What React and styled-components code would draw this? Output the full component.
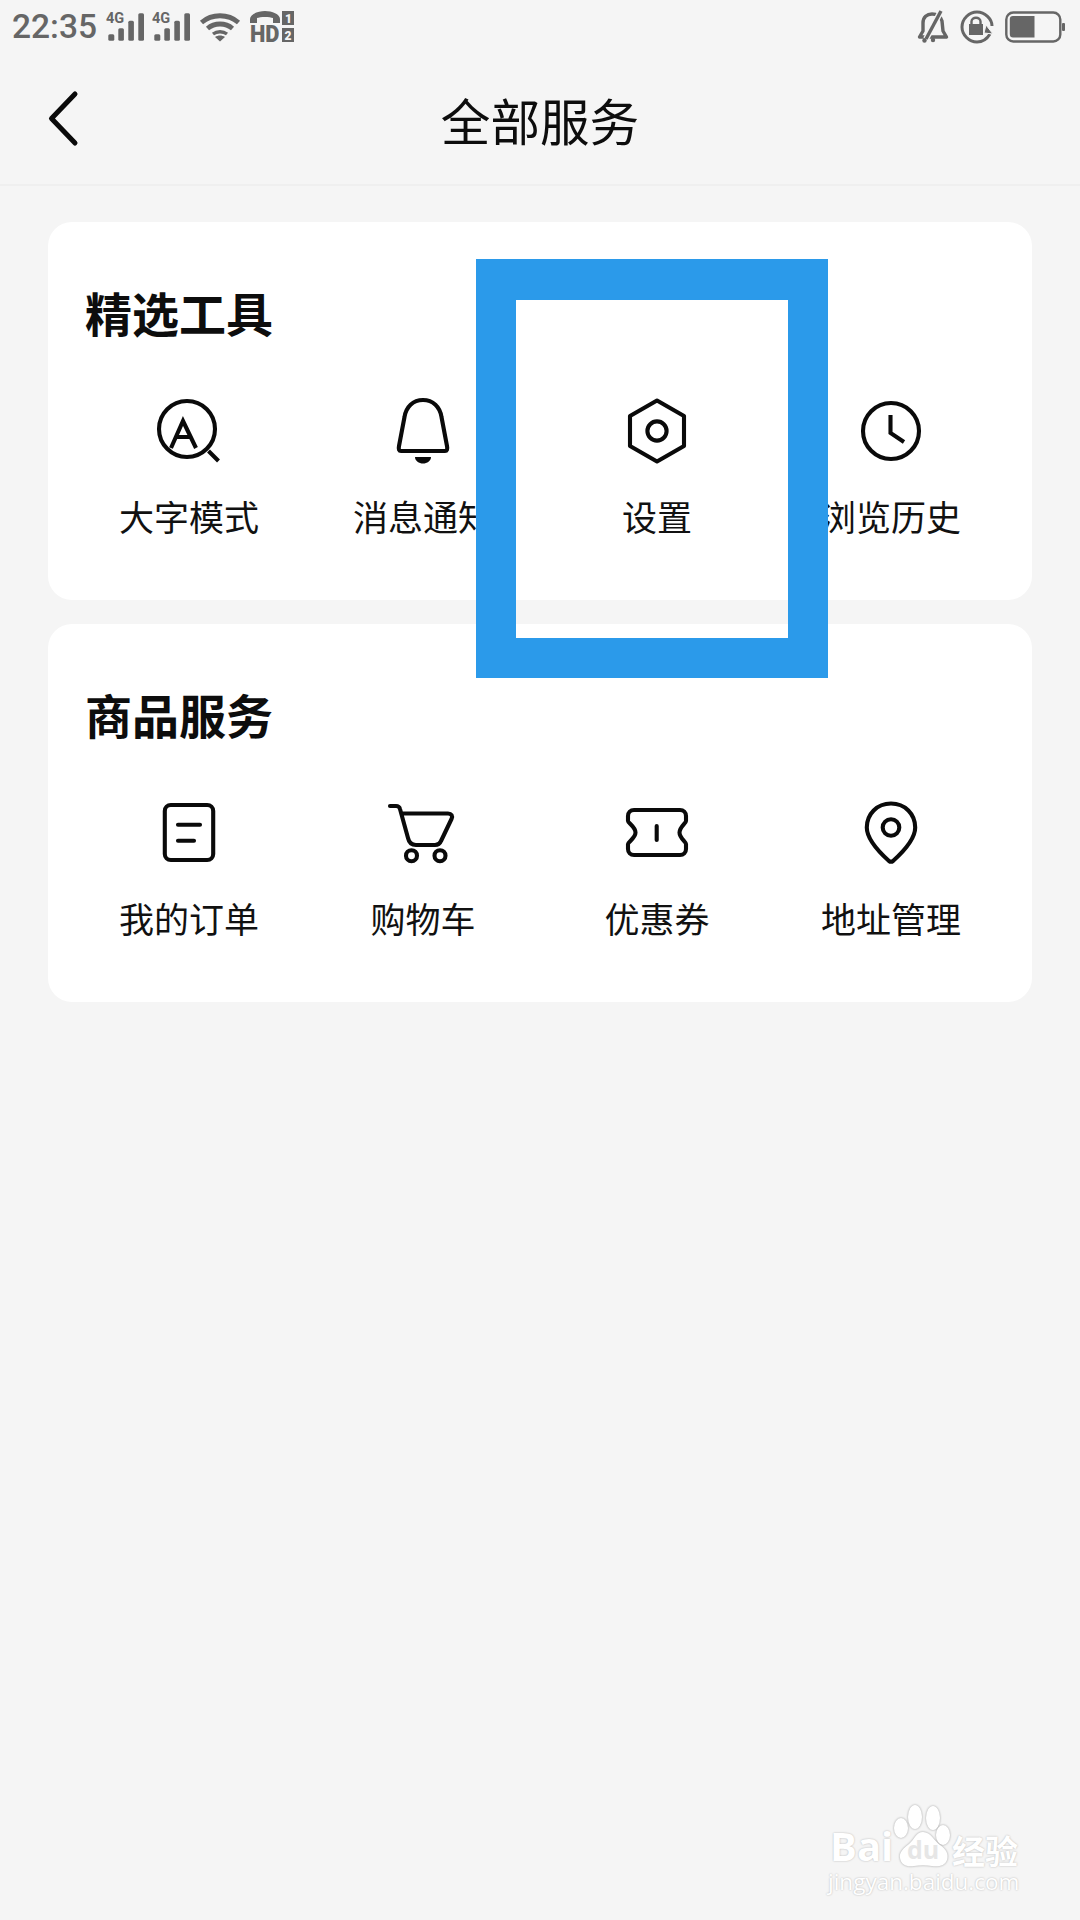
import React from "react";
import styled, { createGlobalStyle } from "styled-components";

const Global = createGlobalStyle`
  html, body { margin: 0; padding: 0; background: #f5f5f5; }
  * { box-sizing: border-box; }
  svg { overflow: visible; }
`;
const CJK = `"Noto Sans CJK SC", "Noto Sans", sans-serif`;

const Page = styled.div`
  position: relative;
  width: 1080px;
  height: 1920px;
  background: #f5f5f5;
  overflow: hidden;
  font-family: ${CJK};
  color: #111;
`;
const Status = styled.div`
  display: flex;
  justify-content: space-between;
  align-items: center;
  height: 54px;
  padding: 0 15px 0 12px;
  color: #666;
`;
const StatusGroup = styled.div`
  display: flex;
  align-items: center;
  gap: ${(p) => p.$gap || 0}px;
`;
const Time = styled.span`
  font: 500 33.5px/54px Roboto, sans-serif;
  color: #666;
  width: 94px;
`;
const WifiSlot = styled.div`
  margin-left: 2px;
`;
const Nav = styled.div`
  display: grid;
  grid-template-columns: 1fr auto 1fr;
  align-items: center;
  height: 132px;
  border-bottom: 2px solid #efefef;
`;
const Back = styled.svg`
  display: block;
  margin-left: 47px;
`;
const Title = styled.h1`
  margin: 0;
  font: 400 49.6px/68px ${CJK};
  color: #0d0d0d;
`;
const Content = styled.div`
  display: flex;
  flex-direction: column;
  gap: 24px;
  padding: 36px 48px 0;
`;
const Card = styled.section`
  background: #fff;
  border-radius: 24px;
  padding: 59px 24px 0;
  height: 378px;
`;
const SectionTitle = styled.h2`
  margin: 0 0 52px 13px;
  font: 700 47px/62px ${CJK};
  color: #0d0d0d;
`;
const Grid = styled.div`
  display: grid;
  grid-template-columns: repeat(4, 1fr);
`;
const Item = styled.div`
  display: flex;
  flex-direction: column;
  align-items: center;
`;
const Icon = styled.svg.attrs({ viewBox: "0 0 72 72", width: 72, height: 72, fill: "none" })`
  display: block;
  stroke: #0a0a0a;
  stroke-width: 4.1;
  stroke-linecap: round;
  stroke-linejoin: round;
`;
const Label = styled.span`
  margin-top: 26px;
  font: 400 35px/46px ${CJK};
  color: #111;
  white-space: nowrap;
`;
const Highlight = styled.div`
  position: absolute;
  left: 476px;
  top: 259px;
  width: 352px;
  height: 419px;
  border: 40px solid #2b9aea;
  border-top-width: 41px;
`;
const Watermark = styled.div`
  position: absolute;
  left: 828px;
  top: 1805px;
  width: 196px;
  color: #fff;
  text-shadow: 0 0 2px rgba(0, 0, 0, 0.28);
`;
const MarkRow = styled.div`
  display: flex;
  align-items: flex-end;
  height: 64px;
`;
const Bai = styled.span`
  flex: none;
  width: 65px;
  padding-left: 2px;
  font: 700 40px/46px "Open Sans", sans-serif;
`;
const PawBox = styled.div`
  position: relative;
  width: 59px;
  height: 64px;
  flex: none;
`;
const Du = styled.span`
  position: absolute;
  left: 14px;
  top: 30px;
  font: 700 25px/28px "Open Sans", sans-serif;
  color: #e6e6e6;
  text-shadow: none;
`;
const Jing = styled.span`
  font: 700 33px/38px ${CJK};
  white-space: nowrap;
`;
const Domain = styled.div`
  font: 400 22.5px/26px "Open Sans", sans-serif;
  white-space: nowrap;
`;

const IconMag = () => (
  <Icon>
    <circle cx="34" cy="34" r="28" />
    <path d="M55.5 56L65.5 66" strokeLinecap="butt" />
    <path d="M18 53L30 26L43 53M23 42H38" strokeLinecap="butt" strokeLinejoin="miter" />
  </Icon>
);
const IconBell = () => (
  <Icon>
    <path d="M36 5C26 5 19 12 17.5 22L12 51Q11 56 14 56H58Q61 56 60 51L54.5 22C53 12 46 5 36 5Z" />
    <path d="M28 62H44C44 66 40 68.5 36 68.5C32 68.5 28 66 28 62Z" fill="#0a0a0a" stroke="none" />
  </Icon>
);
const IconHex = () => (
  <Icon>
    <path d="M36 5.5L63 21V51L36 66.5L9 51V21Z" />
    <circle cx="36" cy="36" r="9.6" />
  </Icon>
);
const IconClock = () => (
  <Icon>
    <circle cx="36" cy="36" r="28" />
    <path d="M35.5 20V38L49 47" strokeLinecap="butt" strokeLinejoin="miter" />
  </Icon>
);
const IconDoc = () => (
  <Icon>
    <rect x="11.8" y="8" width="48.4" height="55" rx="6" />
    <path d="M25 27.7H47M25 43.7H41" />
  </Icon>
);
const IconCart = () => (
  <Icon>
    <path d="M3 9H9C11 9 12.5 10 13 12L21 41C22 45.5 24.5 48 29 48H48C51 48 53 46.5 54 44L64.5 22C66 19 64.5 16.5 61 16.5H15" />
    <circle cx="24.5" cy="58.7" r="5.5" />
    <circle cx="53" cy="58.7" r="5.5" />
  </Icon>
);
const IconTicket = () => (
  <Icon>
    <path d="M13 13H59C62.5 13 65 15.5 65 19V24C65 26 58.5 30 58.5 35.5C58.5 41 65 45 65 47V52C65 55.5 62.5 58 59 58H13C9.5 58 7 55.5 7 52V47C7 45 14.5 41 14.5 35.5C14.5 30 7 26 7 24V19C7 15.5 9.5 13 13 13Z" />
    <path d="M35.7 29V43" />
  </Icon>
);
const IconPin = () => (
  <Icon>
    <path d="M36 6.5C22 6.5 11.8 17 11.8 30.5C11.8 42 24 55 34 64Q36 65.5 38 64C48 55 60.2 42 60.2 30.5C60.2 17 50 6.5 36 6.5Z" />
    <circle cx="36" cy="30.5" r="8.3" />
  </Icon>
);

const Signal = () => (
  <svg width="46" height="32" viewBox="0 0 46 32" fill="#666">
    <text x="0" y="12.3" fontFamily="Roboto, sans-serif" fontWeight="700" fontSize="14.5">4G</text>
    <rect x="2.3" y="23.3" width="6" height="6.4" rx="1.5" />
    <rect x="12.3" y="17.3" width="5.6" height="12.4" rx="1.5" />
    <rect x="22.3" y="9.7" width="5.6" height="20" rx="1.5" />
    <rect x="32.3" y="2.3" width="5.7" height="27.4" rx="1.5" />
  </svg>
);
const Wifi = () => (
  <svg width="40" height="30" viewBox="0 0 40 30" fill="none" stroke="#666" strokeWidth="4.8">
    <path d="M1.5 10.5C12 1.5 28 1.5 38.5 10.5" />
    <path d="M7.5 16.5C14.5 10.5 25.5 10.5 32.5 16.5" />
    <path d="M13 22C17 19 23 19 27 22" strokeWidth="3.4" />
    <path d="M15 25L20 29.5L25 25C22 23 18 23 15 25Z" fill="#666" stroke="none" />
  </svg>
);
const PhoneHd = () => (
  <svg width="44" height="32" viewBox="0 0 44 32" fill="#666">
    <path d="M0 12V8C0 3 8 0 15 0C22 0 30 3 30 8V12H23V7C20 5.5 10 5.5 7 7V12Z" />
    <text x="0" y="30.7" fontFamily="Roboto, sans-serif" fontWeight="900" fontSize="23" textLength="29.5" lengthAdjust="spacingAndGlyphs">HD</text>
    <rect x="32" y="0" width="12" height="14" />
    <rect x="32" y="17" width="12" height="14" />
    <text x="35" y="11.5" fill="#f5f5f5" fontFamily="Roboto, sans-serif" fontWeight="900" fontSize="12">1</text>
    <text x="34.5" y="28.5" fill="#f5f5f5" fontFamily="Roboto, sans-serif" fontWeight="900" fontSize="12">2</text>
  </svg>
);
const BellOff = () => (
  <svg width="32" height="34" viewBox="0 0 32 34" fill="none" stroke="#666" strokeWidth="3.4">
    <path d="M2.5 27L6 21V13C6 7 10 4 15 4C20 4 24 7 25 11L26 21L29.5 27Z" strokeLinejoin="round" />
    <path d="M9 29L24 1" stroke="#f5f5f5" strokeWidth="6" />
    <path d="M9 29L24 1" />
    <circle cx="7.5" cy="30.5" r="2.2" fill="#666" stroke="none" />
    <circle cx="16" cy="30" r="2.2" fill="#666" stroke="none" />
  </svg>
);
const LockRotate = () => (
  <svg width="34" height="34" viewBox="0 0 34 34" fill="none" stroke="#666" strokeWidth="3">
    <path d="M30 24C27 29 22 32 17 32C9 32 2 25 2 17C2 9 9 2 17 2C25 2 32 9 32 16" />
    <path d="M26 15L33 24L24 23Z" fill="#666" stroke="#f5f5f5" strokeWidth="1" />
    <rect x="9" y="14" width="14" height="11" fill="#666" stroke="none" />
    <path d="M11.5 14V11.5C11.5 6.5 20.5 6.5 20.5 11.5V14" strokeWidth="2.4" />
  </svg>
);
const Battery = () => (
  <svg width="60" height="32" viewBox="0 0 60 32" fill="none">
    <rect x="1.3" y="1.5" width="54" height="29" rx="7" stroke="#666" strokeWidth="2.4" />
    <path d="M8 5H29.5V26.5H8Q4.8 26.5 4.8 23V8Q4.8 5 8 5Z" fill="#666" />
    <rect x="57" y="12" width="3" height="8" rx="1" fill="#666" />
  </svg>
);

const tools = [
  ["大字模式", IconMag],
  ["消息通知", IconBell],
  ["设置", IconHex],
  ["浏览历史", IconClock],
];
const goods = [
  ["我的订单", IconDoc],
  ["购物车", IconCart],
  ["优惠券", IconTicket],
  ["地址管理", IconPin],
];

const Section = ({ title, items }) => (
  <Card>
    <SectionTitle>{title}</SectionTitle>
    <Grid>
      {items.map(([label, Glyph]) => (
        <Item key={label}>
          <Glyph />
          <Label>{label}</Label>
        </Item>
      ))}
    </Grid>
  </Card>
);

export default function App() {
  return (
    <Page>
      <Global />
      <Status>
        <StatusGroup>
          <Time>22:35</Time>
          <Signal />
          <Signal />
          <WifiSlot>
            <StatusGroup $gap={10}>
              <Wifi />
              <PhoneHd />
            </StatusGroup>
          </WifiSlot>
        </StatusGroup>
        <StatusGroup $gap={11}>
          <BellOff />
          <LockRotate />
          <Battery />
        </StatusGroup>
      </Status>
      <Nav>
        <Back width="36" height="60" viewBox="0 0 36 60" fill="none" stroke="#0a0a0a" strokeWidth="5" strokeLinecap="round" strokeLinejoin="round">
          <path d="M28 5L4.5 29.5L28 54" />
        </Back>
        <Title>全部服务</Title>
        <span />
      </Nav>
      <Content>
        <Section title="精选工具" items={tools} />
        <Section title="商品服务" items={goods} />
      </Content>
      <Highlight />
      <Watermark>
        <MarkRow>
          <Bai>Bai</Bai>
          <PawBox>
            <svg width="60" height="64" viewBox="0 0 60 64" fill="#fff" style={{ filter: "drop-shadow(0 0 1px rgba(0,0,0,.35))" }}>
              <ellipse cx="22" cy="12" rx="7" ry="12" />
              <ellipse cx="40" cy="13" rx="7" ry="12" />
              <ellipse cx="8" cy="23" rx="7" ry="10" />
              <ellipse cx="50" cy="30" rx="7" ry="10" />
              <path d="M30 27C38 27 41 36 47 40C53 44 56 49 54 55C52 61 45 62 39 61C33 60 27 60 21 61C14 62 8 60 7 53C6 47 11 43 16 39C21 35 23 27 30 27Z" />
            </svg>
            <Du>du</Du>
          </PawBox>
          <Jing>经验</Jing>
        </MarkRow>
        <Domain>jingyan.baidu.com</Domain>
      </Watermark>
    </Page>
  );
}
